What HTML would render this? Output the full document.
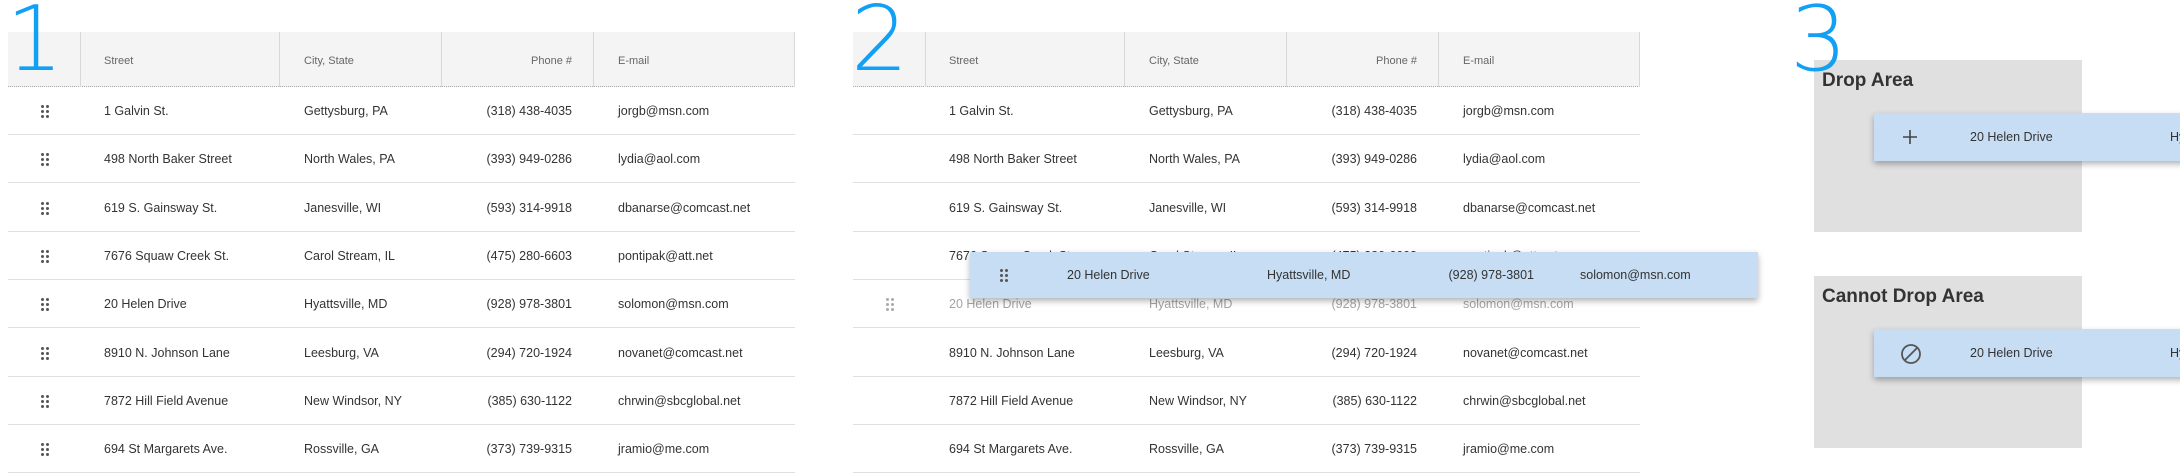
<!DOCTYPE html>
<html><head><meta charset="utf-8"><style>
*{margin:0;padding:0;box-sizing:border-box}
body{width:2180px;height:473px;background:#fff;position:relative;overflow:hidden;font-family:"Liberation Sans",sans-serif;color:#333}
.num{position:absolute;top:-5px;font-size:90px;color:#12a0f5;line-height:1;font-family:"DejaVu Sans","Liberation Sans",sans-serif;font-weight:200;z-index:10}
.tbl{position:absolute;top:32px;width:787px}
.hd{position:absolute;left:0;top:0;width:787px;height:55px;background:#f4f4f4;border-bottom:1px dotted #aaa}
.dv{position:absolute;top:0;height:55px;width:1px;background:#d8d8d8}
.t{position:absolute;font-size:12.5px;white-space:nowrap;line-height:16px}
.h{font-size:11px;color:#666}
.row{position:absolute;left:0;width:787px;height:48px;border-bottom:1px solid #e0e0e0}
.row .t{top:16px}
.grip{position:absolute;width:8px;height:12px}
.grip i{position:absolute;width:3px;height:3px;border-radius:50%;background:#555}
.float{position:absolute;background:#c6ddf3;box-shadow:0 3px 6px rgba(0,0,0,.3)}
.box{position:absolute;left:1814px;width:268px;height:172px;background:#e0e0e0}
.box b{position:absolute;left:8px;top:10px;font-size:19px;color:#333}
</style></head><body>

<div class="tbl" style="left:8px">
 <div class="hd">
  <div class="dv" style="left:72px"></div><div class="dv" style="left:271px"></div><div class="dv" style="left:433px"></div><div class="dv" style="left:585px"></div><div class="dv" style="left:786px"></div>
  <div class="t h" style="left:96px;top:21px">Street</div>
  <div class="t h" style="left:296px;top:21px">City, State</div>
  <div class="t h" style="left:470px;top:21px;width:94px;text-align:right">Phone #</div>
  <div class="t h" style="left:610px;top:21px">E-mail</div>
 </div>
 <div id="rows1"></div>
</div>

<div class="tbl" style="left:853px">
 <div class="hd">
  <div class="dv" style="left:72px"></div><div class="dv" style="left:271px"></div><div class="dv" style="left:433px"></div><div class="dv" style="left:585px"></div><div class="dv" style="left:786px"></div>
  <div class="t h" style="left:96px;top:21px">Street</div>
  <div class="t h" style="left:296px;top:21px">City, State</div>
  <div class="t h" style="left:470px;top:21px;width:94px;text-align:right">Phone #</div>
  <div class="t h" style="left:610px;top:21px">E-mail</div>
 </div>
 <div id="rows2"></div>
</div>

<div class="float" style="left:970px;top:252px;width:788px;height:46px">
 <div class="grip" style="left:30px;top:17px"><i style="left:0;top:0"></i><i style="left:5px;top:0"></i><i style="left:0;top:5px"></i><i style="left:5px;top:5px"></i><i style="left:0;top:10px"></i><i style="left:5px;top:10px"></i></div>
 <div class="t" style="left:97px;top:15px">20 Helen Drive</div>
 <div class="t" style="left:297px;top:15px">Hyattsville, MD</div>
 <div class="t" style="left:470px;top:15px;width:94px;text-align:right">(928) 978-3801</div>
 <div class="t" style="left:610px;top:15px">solomon@msn.com</div>
</div>

<div class="box" style="top:60px"><b>Drop Area</b></div>
<div class="box" style="top:276px"><b>Cannot Drop Area</b></div>
<div class="float" style="left:1874px;top:113px;width:320px;height:48px">
 <svg style="position:absolute;left:28px;top:16px" width="16" height="16"><path d="M8 1V15M1 8H15" stroke="#444" stroke-width="1.6"/></svg>
 <div class="t" style="left:96px;top:16px">20 Helen Drive</div>
 <div class="t" style="left:296px;top:16px">Hy</div>
</div>
<div class="float" style="left:1874px;top:329px;width:320px;height:48px">
 <svg style="position:absolute;left:26px;top:14px" width="22" height="22"><circle cx="11" cy="11" r="9" fill="none" stroke="#555" stroke-width="1.8"/><path d="M5 17L17 5" stroke="#555" stroke-width="1.8"/></svg>
 <div class="t" style="left:96px;top:16px">20 Helen Drive</div>
 <div class="t" style="left:296px;top:16px">Hy</div>
</div>

<div class="num" style="left:6px">1</div>
<div class="num" style="left:851px">2</div>
<div class="num" style="left:1790px">3</div>

<script>
var d=[["1 Galvin St.","Gettysburg, PA","(318) 438-4035","jorgb@msn.com"],
["498 North Baker Street","North Wales, PA","(393) 949-0286","lydia@aol.com"],
["619 S. Gainsway St.","Janesville, WI","(593) 314-9918","dbanarse@comcast.net"],
["7676 Squaw Creek St.","Carol Stream, IL","(475) 280-6603","pontipak@att.net"],
["20 Helen Drive","Hyattsville, MD","(928) 978-3801","solomon@msn.com"],
["8910 N. Johnson Lane","Leesburg, VA","(294) 720-1924","novanet@comcast.net"],
["7872 Hill Field Avenue","New Windsor, NY","(385) 630-1122","chrwin@sbcglobal.net"],
["694 St Margarets Ave.","Rossville, GA","(373) 739-9315","jramio@me.com"]];
function grip(c){return '<div class="grip" style="left:33px;top:18px">'+[[0,0],[5,0],[0,5],[5,5],[0,10],[5,10]].map(function(p){return '<i style="left:'+p[0]+'px;top:'+p[1]+'px;background:'+c+'"></i>'}).join('')+'</div>';}
function build(id,t2){var h='';d.forEach(function(r,i){var top=55+i*48.3;var op=(t2&&i==4)?'opacity:.45;':'';
h+='<div class="row" style="top:'+top+'px">';
if(!t2)h+=grip('#555');else if(i==4)h+=grip('#aaa');
h+='<div style="'+op+'"><div class="t" style="left:96px">'+r[0]+'</div><div class="t" style="left:296px">'+r[1]+'</div><div class="t" style="left:470px;width:94px;text-align:right">'+r[2]+'</div><div class="t" style="left:610px">'+r[3]+'</div></div></div>';});
document.getElementById(id).innerHTML=h;}
build('rows1',false);build('rows2',true);
</script>
</body></html>
